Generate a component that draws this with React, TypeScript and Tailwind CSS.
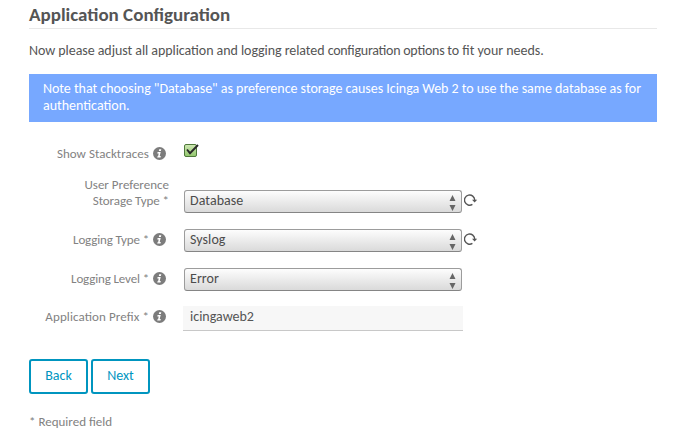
import type { ReactNode } from "react";

function InfoIcon() {
  return (
    <svg viewBox="0 0 13 13" className="relative -top-px ml-1 mr-[3px] block h-[13px] w-[13px] shrink-0">
      <circle cx="6.5" cy="6.5" r="6.5" fill="#7c7c7c" />
      <path d="M6.2 2.2h2.1l-.4 1.8H5.8zM4.6 5h3.1l-1 4.1h1.1l-.3 1.4H4.2l.3-1.3h.6l.6-2.8H4.3z" fill="#fff" />
    </svg>
  );
}

function ReloadIcon() {
  return (
    <svg viewBox="0 0 14 14" className="relative -top-px ml-px block h-[14px] w-[14px] shrink-0">
      <path d="M8.4 11.4A5.1 5.1 0 1 1 10.7 7" fill="none" stroke="#555" strokeWidth="1.4" />
      <path d="M8 6.8h5.2L10.6 9.6z" fill="#555" />
    </svg>
  );
}

function Select({ value }: { value: string }) {
  return (
    <div className="mx-px mt-px flex h-[23px] w-[278px] shrink-0 items-center justify-between rounded-[3px] border border-[#9c9c9c] border-b-[#858585] bg-linear-to-b from-[#fdfdfd] to-[#dadada] pl-[5px] pr-[5px] text-[14px] text-[#4c4c4c]">
      <span className="relative -top-px tracking-[0.06px]">{value}</span>
      <svg viewBox="0 0 7 17" className="relative top-px h-[17px] w-[7px]">
        <path d="M3.5 1 6.5 7h-6zM.5 11h6l-3 6z" fill="#666" />
      </svg>
    </div>
  );
}

function Label({ children, info = true }: { children: ReactNode; info?: boolean }) {
  return (
    <div className="flex w-[140px] shrink-0 items-center justify-end whitespace-nowrap text-right text-[13px] leading-4 text-[#828282]">
      {children}
      {info && <InfoIcon />}
    </div>
  );
}

export default function App() {
  return (
    <main className="h-[440px] w-[674px] overflow-hidden bg-white pl-[29px] pr-[17px] font-[Carlito,Lato,sans-serif] text-[14px] text-[#555] [font-feature-settings:'liga']">
      <h1 className="h-[29px] border-b border-[#e8e8e8] pt-[5px] text-[19px] font-bold leading-5">
        Application Configuration
      </h1>
      <p className="mt-[13px] h-[32px] whitespace-nowrap leading-[17px]">
        <span className="tracking-[-0.06px]">Now please adjust all application and logging related </span>
        <span className="tracking-[-0.26px]">configuration options </span>
        <span className="tracking-[-0.03px]">to fit your needs.</span>
      </p>
      <div className="h-12 whitespace-nowrap bg-[#77a8ff] px-3.5 pt-[6px] leading-[17px] text-white">
        <div className="tracking-[-0.03px]">Note that choosing "Database" as preference storage causes Icinga Web 2 to use the same database as for</div>
        <div>authentication.</div>
      </div>

      <div className="mt-6 flex h-4 items-center">
        <Label><span className="tracking-[0.04px]">Show Stacktraces</span></Label>
        <svg viewBox="0 0 16 16" className="-mt-[7px] ml-[14px] h-4 w-4">
          <defs>
            <linearGradient id="check" x2="0" y2="1">
              <stop stopColor="#d0e8b5" />
              <stop offset="1" stopColor="#91c66c" />
            </linearGradient>
          </defs>
          <rect x="1.5" y="1.5" width="12" height="12" rx="1.5" fill="url(#check)" stroke="#4f793b" />
          <path d="M4 6.5 7 10.2 15 2" fill="none" stroke="#292929" strokeWidth="1.9" />
        </svg>
      </div>

      <div className="mt-[15px] flex h-9 items-end">
        <Label info={false}><div className="mb-[4px]">User Preference<br /><span className="tracking-[-0.08px]">Storage Type *</span></div></Label>
        <div className="ml-[14px] flex items-center"><Select value="Database" /><ReloadIcon /></div>
      </div>
      <div className="mt-[15px] flex h-6 items-center">
        <Label><span className="tracking-[-0.14px]">Logging Type *</span></Label>
        <div className="ml-[14px] flex items-center"><Select value="Syslog" /><ReloadIcon /></div>
      </div>
      <div className="mt-[15px] flex h-6 items-center">
        <Label><span className="tracking-[-0.14px]">Logging Level *</span></Label>
        <div className="ml-[14px]"><Select value="Error" /></div>
      </div>
      <div className="mt-[15px] flex h-[25px] items-start">
        <div className="pt-[3px]"><Label><span className="tracking-[0.1px]">Application Prefix *</span></Label></div>
        <div className="ml-[14px] h-[25px] w-[280px] border-b border-[#c8c8c8] bg-[#f7f7f7] pl-[7px] leading-[22px]">icingaweb2</div>
      </div>

      <div className="mt-7 flex gap-[3px] text-[#0095bf]">
        <button className="h-[35px] w-[59px] rounded-[3px] border-2 border-[#0095bf] pb-0.5">Back</button>
        <button className="h-[35px] w-[59px] rounded-[3px] border-2 border-[#0095bf] pb-0.5">Next</button>
      </div>
      <p className="mt-5 text-[13px] leading-4 text-[#828282]">* Required field</p>
    </main>
  );
}
